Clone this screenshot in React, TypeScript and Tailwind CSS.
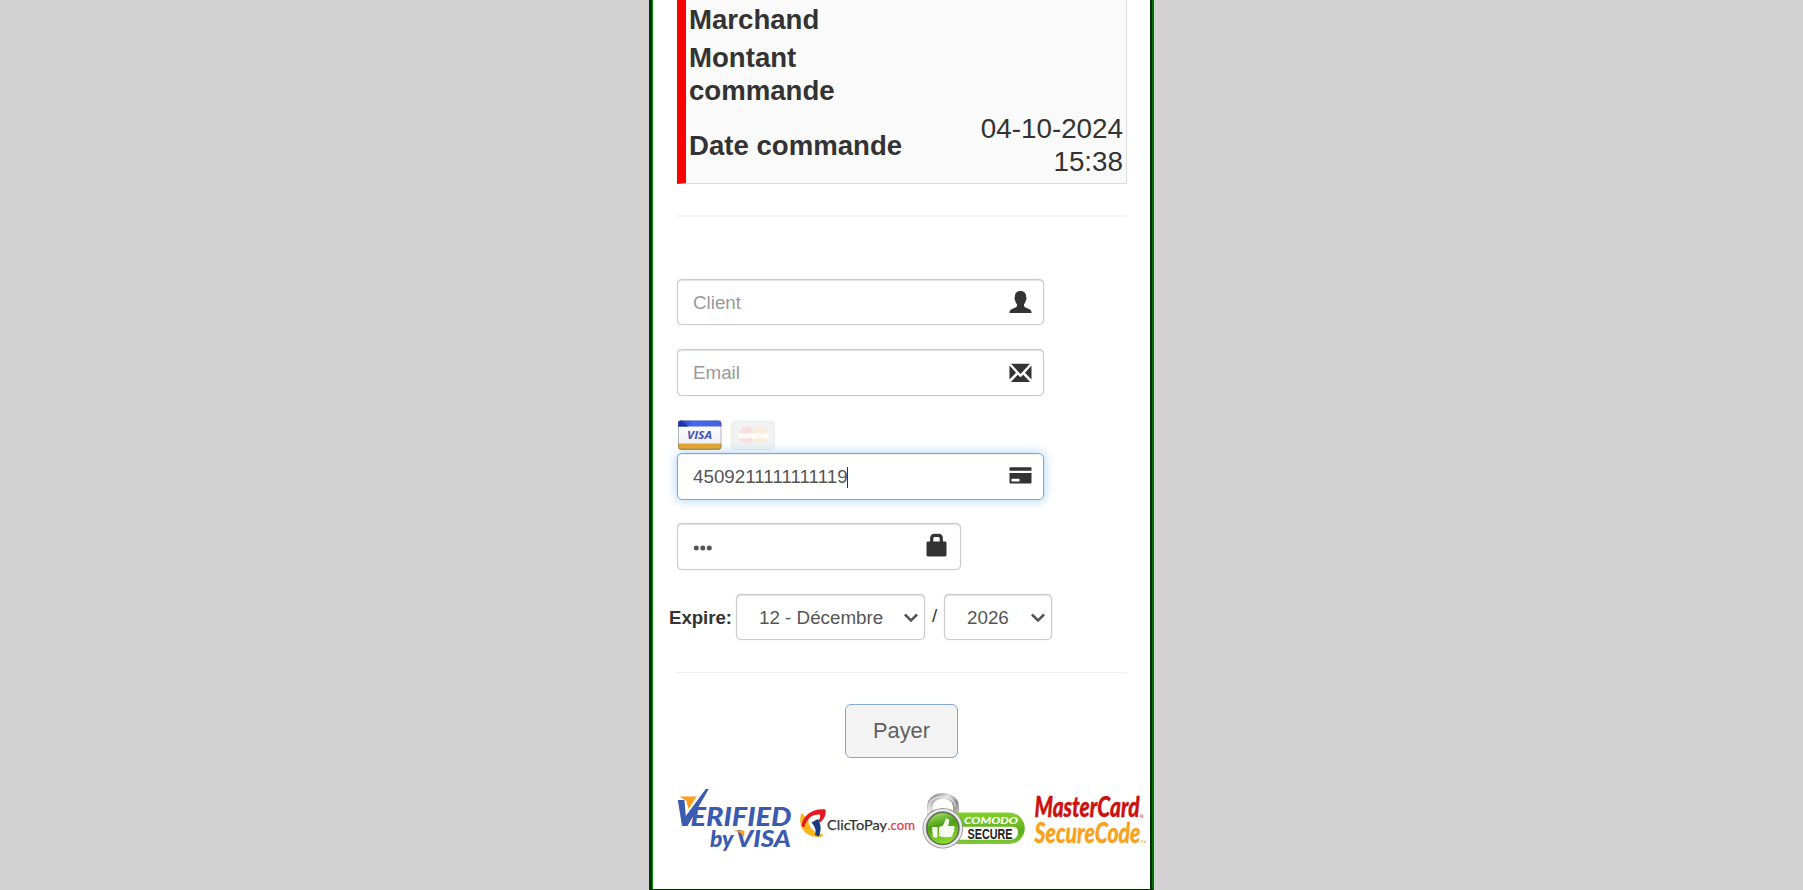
import type { ReactNode } from "react";

const field =
  "flex items-center justify-between rounded-[5px] border border-[#ccc] bg-white text-[18.8px] leading-[26px] text-[#555] shadow-[inset_0_1px_1px_rgba(0,0,0,0.12),0_0_1px_rgba(0,0,0,0.25)]";

function UserIcon() {
  return (
    <svg className="h-[24px] w-[23px]" viewBox="0 0 23 24" fill="#333">
      <path d="M11.5 1C15.5 1 17.3 3.4 17.2 7.6C17.8 8.2 17.5 9.6 16.900 10.2C16.600 12 15.900 13.2 15 14.200V16C15.600 17.600 18 18 20 19C22 20 22.600 21.300 22.600 23H0.400C0.400 21.300 1 20 3 19C5 18 7.400 17.600 8 16V14.200C7.100 13.200 6.400 12 6.100 10.200C5.500 9.600 5.200 8.200 5.800 7.600C5.700 3.400 7.500 1 11.500 1Z" />
    </svg>
  );
}

function EnvelopeIcon() {
  return (
    <svg className="h-[20px] w-[23px]" viewBox="0 0 23 20" fill="#333">
      <path d="M2 .8h19L11.500 11Z" />
      <path d="M.5 2.600 7 9.800.5 16.500ZM22.500 2.600 16 9.800l6.500 6.700ZM1.800 19l7-7.300 2.700 2.600 2.700-2.600 7 7.300Z" />
    </svg>
  );
}

function CreditCardIcon() {
  return (
    <svg className="mb-[2px] h-[17px] w-[23px]" viewBox="0 0 23 17" fill="#333">
      <path d="M.5 1.300Q.5.200 1.500.200h20q1 0 1 1.100v2.500H.5Z" />
      <path fillRule="evenodd" d="M.5 6h22v9.500q0 1-1 1h-20q-1 0-1-1ZM2.500 11.700v2.800h8v-2.800Z" />
    </svg>
  );
}

function LockIcon() {
  return (
    <svg className="mb-[3px] h-[24px] w-[21px]" viewBox="0 0 21 24">
      <path d="M5.700 10V5.700Q5.700 2.400 8.500 2.400h4q2.800 0 2.800 3.300V10" fill="none" stroke="#333" strokeWidth="3.200" />
      <rect x=".5" y="8.500" width="20" height="15" rx="1.400" fill="#333" />
    </svg>
  );
}

function Select({ value, className }: { value: string; className: string }) {
  return (
    <div className={`${field} h-[46px] pr-[6px] ${className}`}>
      <span className="pt-[2px]">{value}</span>
      <svg className="mt-px h-[10px] w-[14px]" viewBox="0 0 14 10" fill="none" stroke="#555" strokeWidth="2.500">
        <path d="M.9 1.500 7 7.500l6.100-6" />
      </svg>
    </div>
  );
}

function OrderRow({ label, children, className }: { label: string; children?: ReactNode; className: string }) {
  return (
    <div className={`flex items-center justify-between ${className}`}>
      <div className="w-[222px] font-bold">{label}</div>
      <div className="w-[150px] text-right text-[27.8px]">{children}</div>
    </div>
  );
}

function CardBrands() {
  return (
    <svg className="block h-[32px] w-[100px]" viewBox="0 0 100 32">
      <defs>
        <linearGradient id="blueBand" x1="0" y1="0" x2="1" y2="0">
          <stop offset="0" stopColor="#1c34b0" />
          <stop offset=".35" stopColor="#4967ec" />
          <stop offset="1" stopColor="#4260dc" />
        </linearGradient>
        <linearGradient id="cardFace" x1="0" y1="0" x2="0" y2="1">
          <stop offset="0" stopColor="#fff" />
          <stop offset="1" stopColor="#ececf0" />
        </linearGradient>
        <clipPath id="cardShape">
          <rect x="1" y=".5" width="43.500" height="29" rx="3" />
        </clipPath>
      </defs>
      <g clipPath="url(#cardShape)">
        <rect x="1" y="0" width="44" height="31" fill="url(#cardFace)" />
        <rect x="1" y="0" width="44" height="6.500" fill="url(#blueBand)" />
        <path d="M1 0h3l7 6.500H1Z" fill="#1b31a4" />
        <rect x="1" y="23.500" width="44" height="7" fill="#e8a52b" />
        <path d="M1 29.300h44" stroke="#b98527" strokeWidth="1.500" />
      </g>
      <rect x="1.500" y="1" width="42.500" height="28.500" rx="3" fill="none" stroke="#626580" strokeOpacity=".45" />
      <text x="10" y="19" fontFamily="Open Sans, sans-serif" fontSize="11" fontWeight="700" fontStyle="italic" fill="#4452b4" textLength="25" lengthAdjust="spacingAndGlyphs">VISA</text>
      <rect x="54.500" y="1" width="43" height="28.500" rx="3" fill="#f1f3f3" stroke="#eceeee" />
      <circle cx="69.500" cy="15" r="8.500" fill="#f7dfe0" />
      <circle cx="82.500" cy="15" r="8.500" fill="#faeeda" />
      <text x="61.500" y="18" fontFamily="Liberation Sans, sans-serif" fontSize="6.500" fontWeight="bold" fill="#fff" stroke="#fff" strokeWidth=".7" textLength="30" lengthAdjust="spacingAndGlyphs">MasterCard</text>
    </svg>
  );
}

function TrustLogos() {
  return (
    <svg className="block h-[70px] w-[474px]" viewBox="0 0 474 70">
      <defs>
        <linearGradient id="metal" x1="0" y1="0" x2="1" y2="1">
          <stop offset="0" stopColor="#888" />
          <stop offset=".35" stopColor="#e3e3e3" />
          <stop offset=".65" stopColor="#8a8a8a" />
          <stop offset="1" stopColor="#c4c4c4" />
        </linearGradient>
        <linearGradient id="badge" x1="0" y1="0" x2="0" y2="1">
          <stop offset="0" stopColor="#86d02c" />
          <stop offset=".6" stopColor="#5cb01d" />
          <stop offset="1" stopColor="#80c835" />
        </linearGradient>
        <linearGradient id="seal" x1=".3" y1="0" x2=".6" y2="1">
          <stop offset="0" stopColor="#a3dc62" />
          <stop offset=".4" stopColor="#4c9f14" />
          <stop offset="1" stopColor="#93e02e" />
        </linearGradient>
      </defs>

      <g fontFamily="Lato, sans-serif" fontWeight="900" fontStyle="italic" fill="#3a5bb0">
        <path d="M.8 15h6.600l1.400 16L28.800 4h3L10.500 41H5Z" />
        <path d="M2.800 11.500h17L11.600 24l-2.200-8Z" fill="#fca019" />
        <text x="13.500" y="41" fontSize="26" textLength="101" lengthAdjust="spacingAndGlyphs">ERIFIED</text>
        <text x="33" y="62.300" fontSize="23.500" textLength="23.500" lengthAdjust="spacingAndGlyphs">by</text>
        <text x="59" y="62.300" fontSize="22.500" textLength="55" lengthAdjust="spacingAndGlyphs">VISA</text>
        <path d="M56.500 45.500h11l-.5 6.500-3.500-4Z" fill="#fca019" />
      </g>

      <path d="M124.500 28c-4.500 13 3 25 20 24l2-2.500c-10-1-16-9-15-15Z" fill="#f9b51a" />
      <path d="M124.500 41C126 30 136 23 148.500 24.500c1 6-1.500 9-5 13l-2.500-1.500c2-2.500 2.500-4 2-6.500-8-.5-13 4-16 13Z" fill="#e31b22" />
      <path d="M134.500 37.500 141 34c3 5 3.500 11 1 17.500l-4-1.500c1.500-4 .5-8-3.500-12.500Z" fill="#173b83" />
      <g fontFamily="Lato, sans-serif" fontSize="13.500">
        <text x="150" y="45" fill="#333" stroke="#333" strokeWidth=".25" textLength="60" lengthAdjust="spacingAndGlyphs">ClicToPay</text>
        <text x="210.500" y="45" fill="#e5343a" stroke="#e5343a" strokeWidth=".2" textLength="27.500" lengthAdjust="spacingAndGlyphs">.com</text>
      </g>

      <path d="M253 31V21.500c0-14 26-14 26 0V31" fill="none" stroke="url(#metal)" strokeWidth="6" />
      <path d="M252 29v-7.500c0-13 26-13 26 0" fill="none" stroke="#eee" strokeOpacity=".7" strokeWidth="1.500" />
      <path d="M270 27.500h64a15.700 15.700 0 0 1 0 31.500h-64Z" fill="url(#badge)" transform="translate(-2 0)" />
      <path d="M281 41.800h54q7 0 6 6.500-1 6.500-8 6.500h-52Z" fill="#fff" />
      <g fontFamily="Lato, sans-serif" fontWeight="900">
        <text x="287" y="38.700" fontSize="10" fontStyle="italic" fill="#fff" textLength="54" lengthAdjust="spacingAndGlyphs">COMODO</text>
        <text x="290.500" y="53.500" fontFamily="Liberation Sans, sans-serif" fontSize="14.500" fontWeight="bold" fill="#222" textLength="45" lengthAdjust="spacingAndGlyphs">SECURE</text>
      </g>
      <circle cx="265.800" cy="43.300" r="20.300" fill="#969696" />
      <circle cx="265.800" cy="43.300" r="18.200" fill="none" stroke="#e9e9e9" strokeWidth="2.400" />
      <circle cx="265.800" cy="43.300" r="16" fill="url(#seal)" stroke="#5d6d54" strokeWidth="1.200" />
      <path d="M255 42H260.500V52.500H256ZM262 42L266 40.500L269 33.500Q273 33.500 272 37.500L271 41H277Q278.500 43 277 44.500Q278 46.500 276 48Q276.500 50 274 52Q266 53 262 51Z" fill="#f6faef" />

      <g fontFamily="Lato, sans-serif" fontWeight="900" fontStyle="italic">
        <text x="357.500" y="32" fontSize="28" fill="#cc1111" stroke="#cc1111" strokeWidth=".4" textLength="105" lengthAdjust="spacingAndGlyphs">MasterCard</text>
        <text x="357.500" y="57.500" fontSize="27.500" fill="#f9a11b" stroke="#f9a11b" strokeWidth=".3" textLength="106" lengthAdjust="spacingAndGlyphs">SecureCode</text>
      </g>
      <circle cx="464.500" cy="31" r="1.300" fill="none" stroke="#dc5050" strokeWidth=".8" />
      <path d="M464 55.800h2.200m-1.100 0v2.200m2 0v-2l.7 1 .7-1v2" fill="none" stroke="#f9a11b" strokeWidth=".6" />
    </svg>
  );
}

export default function App() {
  return (
    <div className="flex h-[890px] justify-center overflow-hidden bg-[#d3d3d3] font-['Liberation_Sans',Arial,sans-serif] text-[#333]">
      <main className="flex h-[890px] w-[505px] shrink-0 border-r-2 border-b border-l-[3px] border-[#003300] border-r-[#007000] bg-white">
        <div className="flex w-full flex-col border-r-2 border-l border-r-[#003300] border-l-[#008a00] pl-[24px]">
          <section className="flex h-[184px] w-[450px] shrink-0 flex-col border-r border-b border-l-[9px] border-[#ddd] border-l-[red] bg-[#fafafa] px-[3px] text-[27.6px] leading-[33px]">
            <OrderRow label="Marchand" className="mt-[3px] h-[33px]" />
            <div className="mt-[5px] flex h-[66px]">
              <div className="w-[170px] font-bold">Montant commande</div>
            </div>
            <OrderRow label="Date commande" className="mt-[5px] h-[66px]">
              04-10-2024 15:38
            </OrderRow>
          </section>
          <hr className="mt-[31px] h-[2px] w-[450px] border-0 bg-[#f3f3f3]" />

          <form className="flex flex-col">
            <div className={`${field} mt-[62px] h-[46px] w-[367px] pr-[11px] pl-[15px]`}>
              <span className="pt-px text-[#999]">Client</span>
              <UserIcon />
            </div>
            <div className={`${field} mt-[24px] h-[47px] w-[367px] pr-[11px] pl-[15px]`}>
              <span className="text-[#999]">Email</span>
              <EnvelopeIcon />
            </div>
            <div className="mt-[24px] h-[33px]">
              <CardBrands />
            </div>
            <div className="flex h-[47px] w-[367px] items-center justify-between rounded-[5px] border border-[#66afe9] bg-white pr-[11px] pl-[15px] text-[18.8px] shadow-[inset_0_1px_1px_rgba(0,0,0,0.075),0_0_11px_rgba(102,175,233,0.6)]">
              <span className="flex items-center pt-px text-[#555]">
                4509211111111119
                <span className="-ml-px h-[21px] w-px bg-[#333]" />
              </span>
              <CreditCardIcon />
            </div>
            <div className={`${field} mt-[23px] h-[47px] w-[284px] pr-[13px] pl-[15px]`}>
              <svg className="mt-[3px] h-[6px] w-[19px]" viewBox="0 0 19 6" fill="#555">
                <circle cx="3.300" cy="3" r="2.500" />
                <circle cx="9.800" cy="3" r="2.500" />
                <circle cx="16.300" cy="3" r="2.500" />
              </svg>
              <LockIcon />
            </div>
            <div className="mt-[24px] -ml-[8px] flex h-[46px] items-center text-[18.8px]">
              <span className="w-[67px] pt-px text-[18.6px] font-bold">Expire:</span>
              <Select value="12 - Décembre" className="w-[189px] pl-[22px]" />
              <span className="w-[19px] pb-[2px] text-center">/</span>
              <Select value="2026" className="w-[108px] pl-[22px]" />
            </div>
          </form>

          <hr className="mt-[32px] h-px w-[450px] border-0 bg-[#eee]" />
          <button className="mt-[31px] ml-[168px] h-[54px] w-[113px] rounded-[6px] border border-[#84a9cf] bg-[#f3f3f3] text-[21.8px] text-[#606060]">
            Payer
          </button>
          <div className="mt-[27px]">
            <TrustLogos />
          </div>
        </div>
      </main>
    </div>
  );
}
